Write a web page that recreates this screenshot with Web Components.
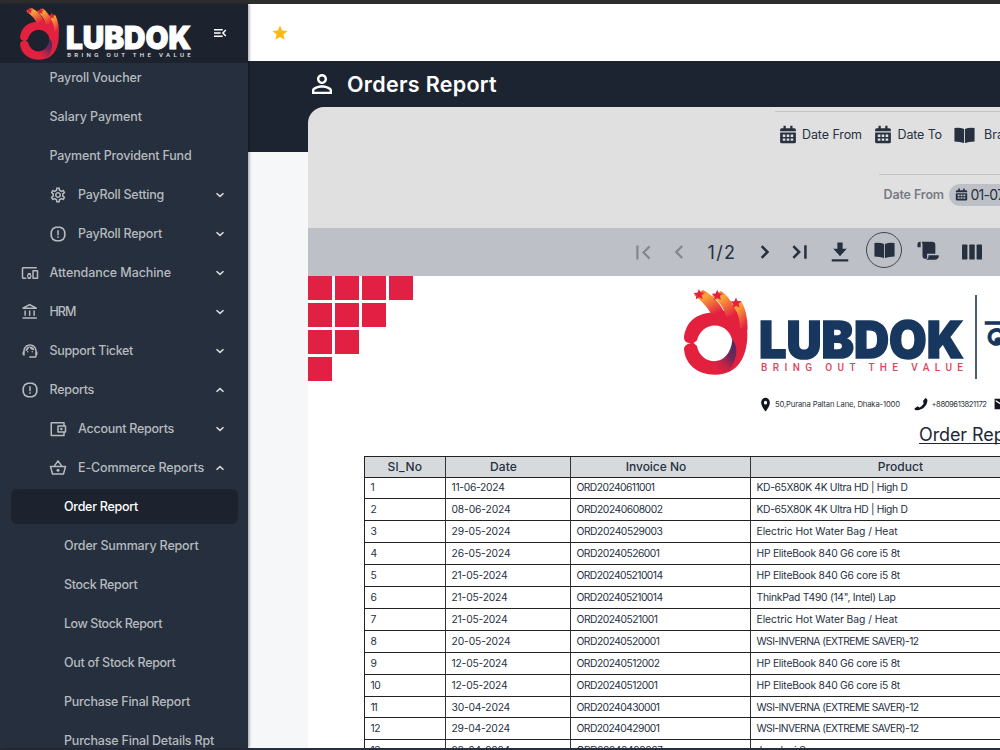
<!DOCTYPE html>
<html lang="en">
<head>
<meta charset="utf-8">
<title>Orders Report</title>
<style>
html,body{margin:0;height:100%;overflow:hidden}
body{font-family:Inter,"Open Sans",sans-serif;color:#26303f}
</style>
</head>
<body>
<lub-app></lub-app>
<script>
const P = {
gear:'<path d="M19.43 12.98c.04-.32.07-.64.07-.98 0-.34-.03-.66-.07-.98l2.11-1.65c.19-.15.24-.42.12-.64l-2-3.46c-.09-.16-.26-.25-.44-.25-.06 0-.12.01-.17.03l-2.49 1c-.52-.4-1.08-.73-1.69-.98l-.38-2.65C14.46 2.18 14.25 2 14 2h-4c-.25 0-.46.18-.49.42l-.38 2.65c-.61.25-1.17.59-1.69.98l-2.49-1c-.06-.02-.12-.03-.18-.03-.17 0-.34.09-.43.25l-2 3.46c-.13.22-.07.49.12.64l2.11 1.65c-.04.32-.07.65-.07.98 0 .33.03.66.07.98l-2.11 1.65c-.19.15-.24.42-.12.64l2 3.46c.09.16.26.25.44.25.06 0 .12-.01.17-.03l2.49-1c.52.4 1.08.73 1.69.98l.38 2.65c.03.24.24.42.49.42h4c.25 0 .46-.18.49-.42l.38-2.65c.61-.25 1.17-.59 1.69-.98l2.49 1c.06.02.12.03.18.03.17 0 .34-.09.43-.25l2-3.46c.12-.22.07-.49-.12-.64l-2.11-1.65zm-1.98-1.71c.04.31.05.52.05.73 0 .21-.02.43-.05.73l-.14 1.13.89.7 1.08.84-.7 1.21-1.27-.51-1.04-.42-.9.68c-.43.32-.84.56-1.25.73l-1.06.43-.16 1.13-.2 1.35h-1.4l-.19-1.35-.16-1.13-1.06-.43c-.43-.18-.83-.41-1.23-.71l-.91-.7-1.06.43-1.27.51-.7-1.21 1.08-.84.89-.7-.14-1.13c-.03-.31-.05-.54-.05-.74s.02-.43.05-.73l.14-1.13-.89-.7-1.08-.84.7-1.21 1.27.51 1.04.42.9-.68c.43-.32.84-.56 1.25-.73l1.06-.43.16-1.13.2-1.35h1.39l.19 1.35.16 1.13 1.06.43c.43.18.83.41 1.23.71l.91.7 1.06-.43 1.27-.51.7 1.21-1.07.85-.89.7.14 1.13zM12 8c-2.21 0-4 1.79-4 4s1.79 4 4 4 4-1.79 4-4-1.79-4-4-4zm0 6c-1.1 0-2-.9-2-2s.9-2 2-2 2 .9 2 2-.9 2-2 2z"/>',
alert:'<path fill="none" stroke="currentColor" stroke-width="2.200" stroke-linejoin="round" d="M9 3h6l4 2 2 4v6l-2 4-4 2H9l-4-2-2-4V9l2-4z"/><path d="M11 7h2v6.500h-2zM11 15h2v2h-2z"/>',
devices:'<path d="M3 6h18V4H3c-1.100 0-2 .9-2 2v12c0 1.100.9 2 2 2h4v-2H3V6zm10 6H9v1.780c-.61.55-1 1.330-1 2.220s.39 1.670 1 2.220V20h4v-1.780c.61-.55 1-1.340 1-2.220s-.39-1.670-1-2.220V12zm-2 5.500c-.83 0-1.500-.67-1.500-1.500s.67-1.500 1.500-1.500 1.500.67 1.500 1.500-.67 1.500-1.500 1.500zM22 8h-6c-.5 0-1 .5-1 1v10c0 .5.5 1 1 1h6c.5 0 1-.5 1-1V9c0-.5-.5-1-1-1zm-1 10h-4v-8h4v8z"/>',
bank:'<path d="M6.500 10h-2v7h2v-7zm6 0h-2v7h2v-7zm8.500 9H2v2h19v-2zm-2.500-9h-2v7h2v-7zm-7-6.740L16.710 6H6.290l5.210-2.740m0-2.260L2 6v2h19V6l-9.500-5z"/>',
agent:'<path d="M21 12.220C21 6.730 16.740 3 12 3c-4.690 0-9 3.650-9 9.280-.6.340-1 .98-1 1.720v2c0 1.100.9 2 2 2h1v-6.100c0-3.870 3.130-7 7-7s7 3.130 7 7V19h-8v2h8c1.100 0 2-.9 2-2v-1.220c.59-.31 1-.92 1-1.640v-2.300c0-.7-.41-1.310-1-1.620z"/><circle cx="9" cy="13" r="1"/><circle cx="15" cy="13" r="1"/><path d="M18 11.030C17.520 8.180 15.040 6 12.050 6c-3.030 0-6.290 2.510-6.030 6.450 2.470-1.010 4.330-3.210 4.860-5.890 1.310 2.630 4 4.440 7.120 4.470z"/>',
wallet:'<path fill="none" stroke="currentColor" stroke-width="2" stroke-linejoin="round" d="M20 7V3.500H3v17h17V17M12 8h10v8H12z"/><circle cx="16.500" cy="12" r="1.700"/>',
basket:'<path fill="none" stroke="currentColor" stroke-width="2" stroke-linejoin="round" d="M2 10h20l-2.700 10H4.700zM7 9.500l5-7 5 7"/><circle cx="12" cy="15" r="2"/>',
down:'<path fill="none" stroke="currentColor" stroke-width="2.800" d="M6 9l6 5.500L18 9"/>',
up:'<path fill="none" stroke="currentColor" stroke-width="2.800" d="M6 15l6-5.500 6 5.500"/>',
menuopen:'<path d="M3 18h13v-2.300H3zm0-4.900h10v-2.200H3zM3 6v2.300h13V6zm18.500 9.590L17.920 12l3.580-3.590L19.900 6.800 14.700 12l5.200 5.200z"/>',
star:'<path d="M12 17.270 18.180 21l-1.640-7.030L22 9.240l-7.190-.61L12 2 9.190 8.630 2 9.240l5.460 4.730L5.820 21z"/>',
person:'<path d="M12 5.900c1.160 0 2.100.94 2.100 2.100s-.94 2.100-2.100 2.100S9.900 9.160 9.900 8s.94-2.100 2.100-2.100m0 9c2.970 0 6.100 1.460 6.100 2.100v1.100H5.900V17c0-.64 3.130-2.100 6.100-2.100M12 4C9.790 4 8 5.790 8 8s1.790 4 4 4 4-1.790 4-4-1.790-4-4-4zm0 9c-2.670 0-8 1.340-8 4v3h16v-3c0-2.660-5.330-4-8-4z"/>',
cal:'<path fill-rule="evenodd" d="M6 1h3v3h6V1h3v3h2.500a2 2 0 0 1 2 2v2h-21V6a2 2 0 0 1 2-2H6zM1.500 9.500h21V21a2 2 0 0 1-2 2h-17a2 2 0 0 1-2-2zM5 12v3h3.500v-3zm5.300 0v3h3.400v-3zm5.200 0v3H19v-3zM5 17v3h3.500v-3zm5.300 0v3h3.400v-3zm5.200 0v3H19v-3z"/>',
book:'<path d="M.500 2.500Q7 1.500 11.500 4v18.500Q7 20.500.500 20.500zM23.500 2.500Q17 1.500 12.500 4v18.500q4.300-2 11-2z"/>',
first:'<path fill="none" stroke="currentColor" stroke-width="2.500" d="M5 4v16M19 5l-7 7 7 7"/>',
prev:'<path fill="none" stroke="currentColor" stroke-width="2.500" d="M15.500 5.500L9 12l6.500 6.500"/>',
next:'<path fill="none" stroke="currentColor" stroke-width="3" d="M8 5l7 7-7 7"/>',
last:'<path fill="none" stroke="currentColor" stroke-width="3" d="M4 5l7 7-7 7M18.500 4v16"/>',
download:'<path d="M8.500.500h7V8H21l-9 9-9-9h5.500zM1 20.700h22V23.500H1z"/>',
scroll:'<path d="M1.500 2.500A2.500 2.500 0 0 1 4 2v6H.500V4.500a3 3 0 0 1 1-2zM5 2h11.500a3.500 3.500 0 0 1 3.500 3.500V15H11v3.500a1.500 1.500 0 0 1-1.500 2A3 3 0 0 1 6 17.500V5a6 6 0 0 0-1-3zM12.500 16.500h11.200a4 4 0 0 1-4 5H9.500a4 4 0 0 0 3-4z"/>',
cols:'<rect x="0" y="3" width="6.500" height="18" rx="1"/><rect x="8.750" y="3" width="6.500" height="18" rx="1"/><rect x="17.500" y="3" width="6.500" height="18" rx="1"/>',
pin:'<path d="M12 1c-4.600 0-8 3.600-8 8 0 6 8 14 8 14s8-8 8-14c0-4.400-3.400-8-8-8zm0 11a3 3 0 1 1 0-6 3 3 0 0 1 0 6z"/>',
phone:'<path d="M19.500 1.500c2.500 1 3.500 2.500 3.500 4.500C22.500 15 15 22.500 5 22.500c-2 0-3.500-.5-4.500-2.500l5.500-4 3.500 2c3-1.500 5.500-4 7-7l-1-4z"/>',
mail:'<path fill-rule="evenodd" d="M1 3h22v18H1zm2 4.500 9 6 9-6V5l-9 6-9-6z"/>'
};
const def=(name,css,html)=>customElements.define(name,class extends HTMLElement{
  constructor(){super();this.attachShadow({mode:'open'});}
  connectedCallback(){ if(!this.done){this.done=true;this.shadowRoot.innerHTML=`<style>*{box-sizing:border-box}${css}</style>`+(typeof html==='function'?html(this):html);} }
});

def('ui-icon',':host{display:block;flex:none;line-height:0}svg{display:block}',
  e=>`<svg width="${e.getAttribute('w')}" height="${e.getAttribute('h')||e.getAttribute('w')}" viewBox="0 0 24 24" preserveAspectRatio="none" fill="currentColor">${P[e.getAttribute('name')]}</svg>`);

def('brand-logo',':host{display:block}svg{display:block;width:100%;height:100%;overflow:visible}text{font-family:Inter,sans-serif}.n{fill:var(--name);stroke:var(--name)}.t{fill:var(--tag);font-family:Roboto,sans-serif}',
`<svg viewBox="0 0 280 86">
<defs>
<linearGradient id="f" x1="0" y1="0" x2=".7" y2="1"><stop offset="0" stop-color="#e8662f"/><stop offset=".35" stop-color="#fba438"/><stop offset="1" stop-color="#e3213f"/></linearGradient>
<linearGradient id="s" x1=".9" y1=".1" x2=".25" y2=".95"><stop offset="0" stop-color="#4a2a63"/><stop offset=".4" stop-color="#7a2655"/><stop offset="1" stop-color="#e3213f" stop-opacity="0"/></linearGradient>
</defs>
<path fill="#e3213f" d="M33 22.500L54 17C61 25 64 36 63.300 48 62 72 50 85 30.700 84.700 13 84.500 1 74 0 59c0-3 3-5.500 7-5.800C3 53 0 52 0 47 2 31 14 21.500 33 22.500zM30.700 35.600C22 35.600 15 42 13 50.500L9.500 53l3.500 3a17.800 17.800 0 1 0 17.700-20.400z" fill-rule="evenodd"/>
<path fill="url(#f)" d="M10 5l9-5C27 4 36 12 41 24L27 24C24 17 16 10 10 5z"/>
<path fill="url(#f)" d="M28 6l9-5C43 5 50 13 54 28L42 26C40 18 35 11 28 6z"/>
<path fill="url(#f)" d="M47 14l10-3c4 6 7 17 6.500 29L56 38C56 28 53 20 47 14z"/>
<path fill="url(#s)" d="M48.300 50C54 56 54 66 47 78 43 82 38 84.500 31 84.700L25 70.500C36 73.500 47 66 48.300 50z"/>
<g fill="#e3213f"><path id="st" d="M15-1l1.500 3.600 4 .1-3 2.600 1.200 3.900-3.600-2-3.400 2.200.8-3.900-3.300-2.500 4.100-.3z"/><use href="#st" x="18.300" y=".8"/><use href="#st" x="37" y="8.500"/></g>
<text class="n" x="75" y="67.500" font-size="51" font-weight="900" stroke-width="1.600" textLength="204.500" lengthAdjust="spacingAndGlyphs">LUBDOK</text>
<text class="t" x="77" y="80.500" font-size="10" font-weight="500" textLength="202" xml:space="preserve">BRING OUT THE VALUE</text>
</svg>`);

def('menu-item',`:host{display:flex;align-items:center;height:39px;flex:none;padding:0 21px 0 0;font-size:12.500px;font-weight:500;color:#b6babf}
.ic{display:flex;justify-content:center;width:18px;margin-right:11px}
:host([level="0"]){padding-left:49.500px}
:host([level="1"]){padding-left:20.500px}
:host([level="2"]){padding-left:49px}
:host([level="3"]){padding-left:53px;margin:0 10px 0 11px;padding-right:0}
:host([active]){background:#1c232f;color:#fff;border-radius:6px;height:35px;margin-top:2px;margin-bottom:2px}
.chev{margin-left:auto;color:#d5d8dc}`,
e=>{const i=e.getAttribute('icon'),c=e.getAttribute('chev');
return (i?`<span class="ic"><ui-icon name="${i}" w="18"></ui-icon></span>`:'')+`<fit-text w="${e.getAttribute('tw')}">${e.getAttribute('label')}</fit-text>`+(c?`<ui-icon class="chev" name="${c}" w="14"></ui-icon>`:'');});

const items=[
[0,'Payroll Voucher',92],[0,'Salary Payment',92.500],[0,'Payment Provident Fund',142],
[2,'PayRoll Setting',86,'gear','down'],[2,'PayRoll Report',84,'alert','down'],
[1,'Attendance Machine',121.5,'devices','down'],[1,'HRM',26,'bank','down'],[1,'Support Ticket',83.500,'agent','down'],[1,'Reports',44.500,'alert','up'],
[2,'Account Reports',96,'wallet','down'],[2,'E-Commerce Reports',126,'basket','up'],
[3,'Order Report',74],[3,'Order Summary Report',134.500],[3,'Stock Report',73.500],[3,'Low Stock Report',98],[3,'Out of Stock Report',111.500],[3,'Purchase Final Report',126],[3,'Purchase Final Details Rpt',150]];

def('side-nav',`:host{display:flex;flex-direction:column;width:248px;height:100%;background:#262f3d;box-shadow:1px 0 3px #0006;z-index:2}
header{height:59px;flex:none;background:#1c232f;display:flex;align-items:flex-start;padding:3.500px 0 0 20px;color:#fff}
brand-logo{width:171.400px;height:52.600px;--name:#fff;--tag:#e4e6ea}
header ui-icon{margin:17px 0 0 21px}
nav{flex:1;overflow:hidden;display:flex;flex-direction:column}
nav menu-item:first-child{margin-top:-5px}`,
`<header><brand-logo></brand-logo><ui-icon name="menuopen" w="16"></ui-icon></header><nav>${items.map(([l,t,w,i,c])=>`<menu-item level="${l}" label="${t}" tw="${w}" ${i?`icon="${i}"`:''} ${c?`chev="${c}"`:''} ${t==='Order Report'?'active':''}></menu-item>`).join('')}</nav>`);

def('filter-panel',`:host{display:block;height:121px;background:#e0e0e0;border-radius:16px 0 0 0;padding-top:4px;font-size:12.500px}
.r{display:flex;align-items:center;border-top:1px solid #c3c4c6;white-space:nowrap}
.a{margin-left:467px;height:46px;padding-left:3.500px}
.b{margin-left:571px;margin-top:17px;height:40px;padding-left:4.500px;font-weight:600;color:#777c84}
.a fit-text{margin:0 12px 0 5.500px}
.pill{display:flex;align-items:center;height:22px;width:110px;flex:none;border-radius:11px;background:#bdc1c7;margin-left:5px;padding-left:6px;font-size:14px;font-weight:400;color:#26303f}
.pill fit-text{margin-left:2.500px}`,
`<div class="r a"><ui-icon name="cal" w="18" h="19"></ui-icon><fit-text w="60">Date From</fit-text><ui-icon name="cal" w="18" h="19"></ui-icon><fit-text w="44.500">Date To</fit-text><ui-icon name="book" w="21" h="18"></ui-icon><fit-text w="42" style="margin-left:9px">Branch</fit-text></div>
<div class="r b"><fit-text w="60.500">Date From</fit-text><div class="pill"><ui-icon name="cal" w="13"></ui-icon><fit-text w="71">01-07-2024</fit-text></div></div>`);

def('report-toolbar',`:host{display:grid;grid-template-columns:36px 36px 50px 36px 34px 46px 42px 46px 42px;padding-left:317px;height:48px;align-items:center;justify-items:center;background:#bdc1c7;color:#26303f}
.off{color:#83878d}fit-text{font-size:18px}
.ring{width:36px;height:36px;border:1px solid #3c4552;border-radius:50%;display:flex;align-items:center;justify-content:center;margin-top:-4px}`,
`<ui-icon class="off" name="first" w="21"></ui-icon><ui-icon class="off" name="prev" w="22"></ui-icon><fit-text w="29">1/2</fit-text><ui-icon name="next" w="20"></ui-icon><ui-icon name="last" w="20"></ui-icon><ui-icon name="download" w="18" h="20"></ui-icon><div class="ring"><ui-icon name="book" w="21" h="18"></ui-icon></div><ui-icon name="scroll" w="22" style="margin-top:-3px"></ui-icon><ui-icon name="cols" w="20"></ui-icon>`);

const rows=[['11-06-2024','20240611001','KD-65X80K 4K Ultra HD | High D',151,53,78],['08-06-2024','20240608002','KD-65X80K 4K Ultra HD | High D',151,59,86],['29-05-2024','20240529003','Electric Hot Water Bag / Heat',141,59,86],['26-05-2024','20240526001','HP EliteBook 840 G6 core i5 8t',143.5,59,83],['21-05-2024','202405210014','HP EliteBook 840 G6 core i5 8t',143.5,56,86],['21-05-2024','202405210014','ThinkPad T490 (14", Intel) Lap',139,56,86],['21-05-2024','20240521001','Electric Hot Water Bag / Heat',141,56,81],['20-05-2024','20240520001','WSI-INVERNA (EXTREME SAVER)-12',162,59,83],['12-05-2024','20240512002','HP EliteBook 840 G6 core i5 8t',143.5,56,83],['12-05-2024','20240512001','HP EliteBook 840 G6 core i5 8t',143.5,56,81],['30-04-2024','20240430001','WSI-INVERNA (EXTREME SAVER)-12',162,58.5,83],['29-04-2024','20240429001','WSI-INVERNA (EXTREME SAVER)-12',162,58.5,83],['28-04-2024','20240428007','Jamdani Saree',70,58.5,86]];
def('order-table',`:host{display:grid;grid-template-columns:81px 125px 180px 300px;grid-template-rows:20.500px repeat(13,21.920px);margin:0 -60px 0 56px;border-left:1px solid #222;border-top:1px solid #222;width:687px}
div{border-right:1px solid #333;border-bottom:1px solid #222;font-size:10.300px;padding:0 0 1px 5.500px;display:flex;align-items:center;overflow:hidden}
.h{background:#d7dadd;justify-content:center;padding:0 0 1px;font-size:12px;font-weight:500}.s{padding-right:9px}`,
[['Sl_No',35],['Date',27],['Invoice No',60.5],['Product',45.5]].map((h,i)=>`<div class="h ${i==1||i==2?'s':''}"><fit-text w="${h[1]}">${h[0]}</fit-text></div>`).join('')+
rows.map((r,i)=>`<div><fit-text w="${[3.5,6,6,6.5,6,6,6,6.5,6.5,10,6,9.5,9.5][i]}">${i+1}</fit-text></div><div><fit-text w="${r[4]}">${r[0]}</fit-text></div><div><fit-text w="${r[5]}">ORD${r[1]}</fit-text></div><div><fit-text w="${r[3]}">${r[2]}</fit-text></div>`).join(''));

def('report-page',`:host{display:block;background:#fff;flex:1;overflow:hidden}
.top{display:flex;height:121px}
.sq{display:grid;grid-template-columns:repeat(4,24px);grid-auto-rows:24px;gap:3px;width:105px;flex:none}
.sq i{background:#e12044}
brand-logo{width:280px;height:86px;margin:14px 0 0 271px;flex:none;--name:#18375f;--tag:#dd4560}
.bar{width:2px;height:84px;margin:19px 0 0 11px;background:#4b5d78;flex:none}
.bn{font-size:46px;line-height:46px;font-weight:700;color:#18375f;margin:36px 0 0 9px}
.contact{display:flex;align-items:center;margin-left:450.500px;height:14px;color:#10151f;font-size:7.700px;white-space:nowrap}
.contact fit-text{color:#30353d}
h2{margin:12px 0 0 611px;font-size:18px;line-height:24px;height:33px;font-weight:400;color:#1d2735}
h2 fit-text{border-bottom:1px solid #1d2735;line-height:21px;height:20px}`,
`<div class="top"><div class="sq">${[[1,1],[2,1],[3,1],[4,1],[1,2],[2,2],[3,2],[1,3],[2,3],[1,4]].map(([c,r])=>`<i style="grid-area:${r}/${c}"></i>`).join('')}</div><brand-logo></brand-logo><div class="bar"></div><span class="bn">ল</span></div>
<div class="contact"><ui-icon name="pin" w="13" h="15"></ui-icon><fit-text w="125" style="margin-left:3.500px">50,Purana Paltan Lane, Dhaka-1000</fit-text><ui-icon name="phone" w="14" h="14" style="margin-left:14.500px"></ui-icon><fit-text w="55" style="margin-left:3px">+8809613821172</fit-text><ui-icon name="mail" w="14" style="margin-left:8px"></ui-icon></div>
<h2><fit-text w="109">Order Report</fit-text></h2><order-table></order-table>`);

def('lub-app',`:host{display:flex;flex-direction:column;width:1000px;height:750px;overflow:hidden}
.strip{height:4px;background:#2d2d2d;flex:none}.foot{height:2px;background:#262f3d;flex:none}
.body{flex:1;display:flex;min-height:0}
main{flex:1;min-width:0;display:flex;flex-direction:column;background:linear-gradient(#1c2431 148px,#f5f7f9 148px)}
.bar{height:57px;background:#fff;flex:none;display:flex;align-items:center;padding-left:22.500px;color:#fdb813}
.head{display:flex;align-items:center;height:46px;flex:none;padding-left:59px;color:#fff;font-size:21.500px;font-weight:600}
.head fit-text{margin-left:10px}
.card{margin-left:60px;flex:1;display:flex;flex-direction:column;min-height:0;overflow:hidden}
filter-panel,report-toolbar{flex:none}`,
`<div class="strip"></div><div class="body"><side-nav></side-nav><main><div class="bar"><ui-icon name="star" w="18"></ui-icon></div><div class="head"><ui-icon name="person" w="30"></ui-icon><fit-text w="150">Orders Report</fit-text></div><div class="card"><filter-panel></filter-panel><report-toolbar></report-toolbar><report-page></report-page></div></main></div><div class="foot"></div>`);

/* Text label whose tracking is adjusted so that it occupies the width given in "w". */
customElements.define('fit-text',class extends HTMLElement{
  constructor(){super();this.attachShadow({mode:'open'}).innerHTML='<style>:host{display:inline-block;white-space:nowrap;flex:none}</style><slot></slot>';}
  connectedCallback(){const w=+this.getAttribute('w'),n=this.textContent.length,b=this.getBoundingClientRect().width;
    if(b&&w&&n>1)this.style.letterSpacing=((w-b)/n).toFixed(3)+'px';}
});
</script>
</body>
</html>
